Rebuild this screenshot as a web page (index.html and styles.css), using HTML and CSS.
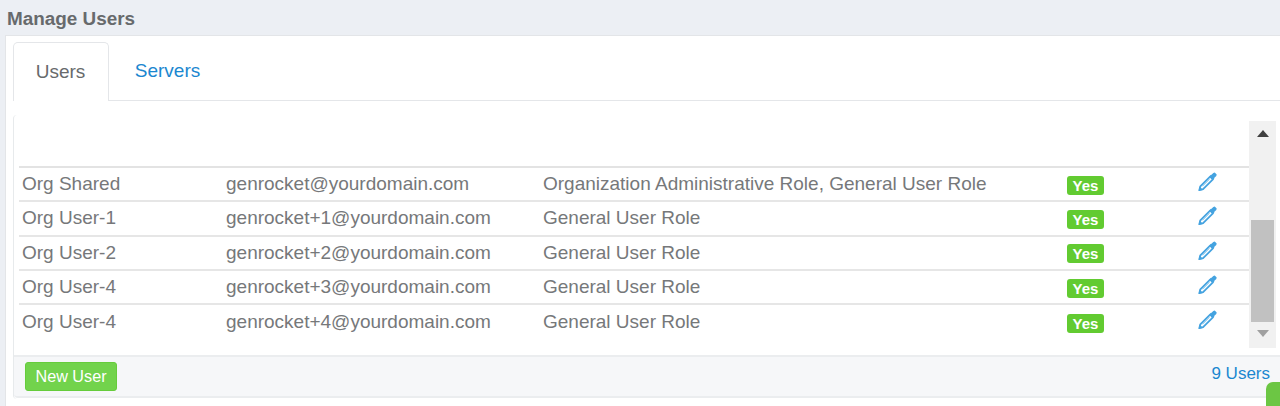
FILE: index.html
```html
<!DOCTYPE html>
<html lang="en">
<head>
<meta charset="utf-8">
<title>Manage Users</title>
<link rel="stylesheet" href="styles.css">
</head>
<body>
<svg class="defs" width="0" height="0" aria-hidden="true">
  <symbol id="pen" viewBox="0 0 20 20">
    <path d="M1.800 18.200l1-3.800L12.600 4.600l2.800 2.800L5.600 17.200z" fill="#fff" stroke="currentColor" stroke-width="1.800" stroke-linejoin="round"/>
    <path d="M12 4.200l1-1.200 1-.2 1.800-1.900 1.400-.4 2 2-.4 1.500-1.900 1.800-.2 1-1.200 1z" fill="currentColor"/>
    <path d="M1.200 18.800l.9-4.300 3.400 3.400z" fill="currentColor"/>
    <path d="M4.900 14.300l7-7" fill="none" stroke="currentColor" stroke-width=".7"/>
  </symbol>
</svg>
<h1 class="page-title">Manage Users</h1>
<main class="panel">
  <nav class="tabs">
    <a class="tab tab-active">Users</a>
    <a class="tab">Servers</a>
  </nav>
  <section class="box">
    <div class="box-body">
      <div class="table">
        <div class="spacer"></div>
        <div class="row"><span>Org Shared</span><span>genrocket@yourdomain.com</span><span>Organization Administrative Role, General User Role</span><span><b class="badge">Yes</b></span><span><svg class="pen"><use href="#pen"/></svg></span></div>
        <div class="row"><span>Org User-1</span><span>genrocket+1@yourdomain.com</span><span>General User Role</span><span><b class="badge">Yes</b></span><span><svg class="pen"><use href="#pen"/></svg></span></div>
        <div class="row"><span>Org User-2</span><span>genrocket+2@yourdomain.com</span><span>General User Role</span><span><b class="badge">Yes</b></span><span><svg class="pen"><use href="#pen"/></svg></span></div>
        <div class="row"><span>Org User-4</span><span>genrocket+3@yourdomain.com</span><span>General User Role</span><span><b class="badge">Yes</b></span><span><svg class="pen"><use href="#pen"/></svg></span></div>
        <div class="row"><span>Org User-4</span><span>genrocket+4@yourdomain.com</span><span>General User Role</span><span><b class="badge">Yes</b></span><span><svg class="pen"><use href="#pen"/></svg></span></div>
      </div>
      <div class="scrollbar">
        <i class="arrow arrow-up"></i>
        <i class="thumb"></i>
        <i class="arrow arrow-down"></i>
      </div>
    </div>
    <footer class="box-footer">
      <button class="btn" type="button">New User</button>
      <a class="count">9 Users</a>
    </footer>
  </section>
</main>
<div class="corner"></div>
</body>
</html>
```

FILE: styles.css
```css
html, body {
  margin: 0;
  height: 406px;
  overflow: hidden;
}
body {
  background: #eceff4;
  font-family: "Liberation Sans", Arial, sans-serif;
  color: #676a6c;
  position: relative;
}
.defs { position: absolute; }
.page-title {
  margin: 0;
  height: 35px;
  box-sizing: border-box;
  padding: 8px 0 0 7px;
  font-size: 18.900px;
  line-height: 21px;
  font-weight: 700;
  color: #676a6c;
}
.panel {
  margin-left: 5px;
  height: 371px;
  box-sizing: border-box;
  background: #fff;
  border-top: 1px solid #e3e5e8;
  border-left: 1px solid #e3e5e8;
  padding: 6px 0 0 7px;
}
.tabs {
  display: flex;
  height: 59px;
  box-sizing: border-box;
  border-bottom: 1px solid #e4e6e9;
}
.tab {
  width: 96px;
  height: 59px;
  box-sizing: border-box;
  padding-top: 18px;
  text-align: center;
  font-size: 19px;
  line-height: 21px;
  color: #1b87d0;
}
.tab + .tab { width: 117px; }
.tab-active {
  color: #676a6c;
  background: #fff;
  padding-right: 1px;
  border: 1px solid #e4e6e9;
  border-bottom: 0;
  border-radius: 5px 5px 0 0;
}
.box {
  margin-top: 14px;
  height: 284px;
  display: flex;
  flex-direction: column;
  border-left: 1px solid #e7eaec;
  border-radius: 4px 0 0 4px;
}
.box-body {
  height: 240px;
  box-sizing: border-box;
  padding: 6px 4px 0 5px;
  display: flex;
  align-items: flex-start;
}
.table { flex: 1; }
.spacer { height: 45px; border-bottom: 2px solid #e3e3e3; }
.row {
  height: 34.300px;
  box-sizing: border-box;
  padding-left: 3px;
  display: grid;
  grid-template-columns: 204px 317px 524px 130px 1fr;
  align-items: center;
  border-bottom: 2px solid #e6e6e6;
  font-size: 19px;
  color: #76787a;
  white-space: nowrap;
}
.row:last-child { border-bottom: 0; }
.badge {
  display: inline-block;
  width: 37px;
  height: 19px;
  border-radius: 3px;
  background: #62cb31;
  color: #fff;
  font-size: 15px;
  line-height: 19px;
  text-align: center;
  vertical-align: middle;
}
.pen {
  display: block;
  width: 21px;
  height: 20px;
  color: #45a3e0;
  position: relative;
  top: -2px;
}
.scrollbar {
  width: 27px;
  height: 227px;
  flex: none;
  background: #f1f1f1;
  display: flex;
  flex-direction: column;
  align-items: center;
}
.arrow {
  width: 0;
  height: 0;
  border-left: 6.500px solid transparent;
  border-right: 6.500px solid transparent;
}
.arrow-up { margin-top: 9px; border-bottom: 7px solid #404040; }
.arrow-down { margin-top: 8px; border-top: 7px solid #a0a0a0; }
.thumb {
  width: 23px;
  height: 102px;
  margin-top: 83px;
  background: #c1c1c1;
}
.box-footer {
  height: 43px;
  box-sizing: border-box;
  display: flex;
  align-items: flex-start;
  justify-content: space-between;
  padding: 5px 10px 0 11px;
  background: #f6f7f9;
  border-top: 2px solid #ebedef;
  border-bottom: 2px solid #ebedef;
  border-bottom-left-radius: 4px;
}
.btn {
  width: 92px;
  height: 29px;
  padding: 0;
  border: 1px solid #66cc3c;
  border-radius: 3px;
  background: #72d34c;
  color: #fff;
  font: 16.200px "Liberation Sans", Arial, sans-serif;
}
.count {
  margin-top: 1px;
  font-size: 17px;
  line-height: 21px;
  color: #1b87d0;
}
.corner {
  position: absolute;
  left: 1266px;
  top: 382px;
  width: 14px;
  height: 24px;
  background: #6cc644;
  border-top-left-radius: 7px;
}
```
